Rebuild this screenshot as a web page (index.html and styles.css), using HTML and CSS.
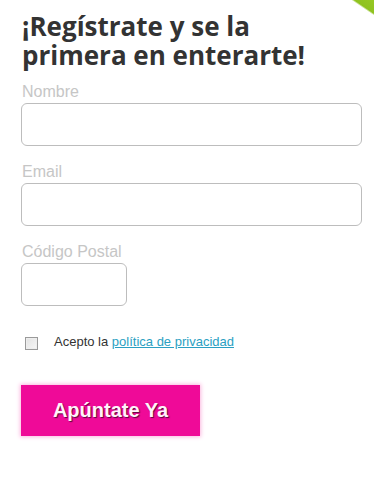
FILE: index.html
```html
<!DOCTYPE html>
<html lang="es">
<head>
<meta charset="utf-8">
<title>Regístrate</title>
<link rel="stylesheet" href="styles.css">
</head>
<body>
<div class="corner"></div>
<form class="signup">
  <h1 class="title">¡Regístrate y se la primera en enterarte!</h1>
  <div class="field">
    <label class="label" for="nombre">Nombre</label>
    <input class="input" id="nombre" type="text">
  </div>
  <div class="field">
    <label class="label" for="email">Email</label>
    <input class="input" id="email" type="text">
  </div>
  <div class="field">
    <label class="label" for="cp">Código Postal</label>
    <input class="input input-short" id="cp" type="text">
  </div>
  <div class="consent">
    <span class="check"></span>
    <span class="consent-text">Acepto la <a class="link" href="#">política de privacidad</a></span>
  </div>
  <button class="submit" type="button">Apúntate Ya</button>
</form>
</body>
</html>
```
FILE: styles.css
```css
html, body {
  margin: 0;
  padding: 0;
  background: #ffffff;
}
body {
  position: relative;
  width: 374px;
  height: 483px;
  overflow: hidden;
  font-family: "Liberation Sans", Arial, sans-serif;
}
.corner {
  position: absolute;
  top: 0;
  right: 0;
  width: 22px;
  height: 15px;
  background: linear-gradient(to top right, transparent 48%, #8fc21f 55%, #96c823 100%);
}
.signup {
  padding: 12px 0 0 21px;
}
.title {
  margin: 0 0 13px 1px;
  font-family: "Open Sans", sans-serif;
  font-weight: 700;
  font-size: 26px;
  line-height: 29px;
  color: #333333;
  width: 320px;
}
.field {
  display: flex;
  flex-direction: column;
  align-items: flex-start;
  margin-bottom: 17px;
}
.label {
  font-size: 16px;
  line-height: 18px;
  color: #c6c6c6;
  margin: 0 0 2px 1px;
}
.input {
  box-sizing: border-box;
  width: 341px;
  height: 43px;
  border: 1px solid #bdbdbd;
  border-radius: 6px;
  background: #fff;
  margin: 0;
}
.input-short {
  width: 106px;
}
.consent {
  display: flex;
  align-items: flex-start;
  margin-top: 29px;
  height: 15px;
}
.check {
  box-sizing: border-box;
  width: 13px;
  height: 13px;
  margin-left: 4px;
  margin-top: 2px;
  border: 1px solid #9a9a9a;
  background: linear-gradient(135deg, #e2e2e2, #f7f7f7);
  box-shadow: inset 0 0 0 1px #eeeeee;
}
.consent-text {
  margin-left: 16px;
  font-size: 13px;
  line-height: 14px;
  color: #333333;
}
.link {
  color: #2a9fc2;
  text-decoration: underline;
}
.submit {
  display: block;
  margin-top: 35px;
  width: 179px;
  height: 51px;
  border: 0;
  border-radius: 0;
  background: #ef0a98;
  box-shadow: 0 0 4px 1px #fbb8e0;
  color: #fff4fb;
  font-family: "Liberation Sans", Arial, sans-serif;
  font-weight: 700;
  font-size: 20px;
  text-shadow: 1px 1px 1px #5b0a3c;
  padding: 0;
  cursor: pointer;
}
```
